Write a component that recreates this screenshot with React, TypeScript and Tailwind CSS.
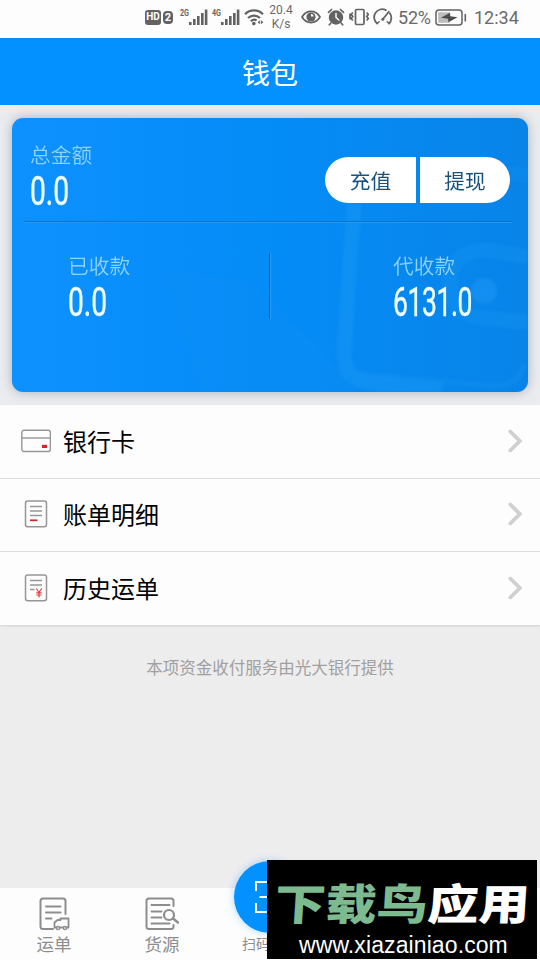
import type { ReactNode } from "react";

interface AmountProps {
    label: string;
    value: string;
    valueClass?: string;
}

interface MenuRowProps {
    label: string;
    icon: ReactNode;
    last?: boolean;
}

interface SignalProps {
    label: string;
}

const Signal = ({ label }: SignalProps) => (
    <svg width="28" height="18" viewBox="0 0 28 18" fill="#636363">
        <text
            x="0"
            y="8"
            fontSize="9.5"
            fontWeight="700"
            textLength="9"
            lengthAdjust="spacingAndGlyphs"
            fontFamily="Roboto, sans-serif"
        >
            {label}
        </text>
        <rect x="9" y="14" width="2.6" height="3" />
        <rect x="13" y="11" width="2.6" height="6" />
        <rect x="17" y="8" width="2.6" height="9" />
        <rect x="21" y="5" width="2.6" height="12" />
        <rect x="24.8" y="1.5" width="2.6" height="15.5" />
    </svg>
);

const StatusBar = () => (
    <div className="flex h-[38px] shrink-0 items-center bg-[#fdfdfd] pb-1 pl-[145px] text-[#6a6a6a] font-['Roboto',sans-serif]">
        <div className="flex h-[15px] w-4 shrink-0 items-center justify-center rounded-[3px] bg-[#636363] text-[10px] leading-none font-bold text-white">
            HD
        </div>
        <div className="ml-[2px] flex h-[13px] w-[10px] shrink-0 items-center justify-center rounded-sm rounded-tr-[4px] bg-[#636363] text-[11px] leading-none font-bold text-white">
            2
        </div>
        <div className="ml-[7px] shrink-0">
            <Signal label="2G" />
        </div>
        <div className="ml-1 shrink-0">
            <Signal label="4G" />
        </div>
        {/* wifi */}
        <svg className="ml-1 shrink-0" width="20" height="18" viewBox="0 0 20 18" fill="none" stroke="#636363" strokeWidth="2.2">
            <path d="M1 6.2C6 1.2 14 1.2 19 6.2" />
            <path d="M4 10C7.4 6.7 12.6 6.7 16 10" />
            <path d="M6.8 13.3C8.8 11.4 11.2 11.4 12.6 12.5" />
            <circle cx="9.8" cy="15.6" r="1.8" fill="#636363" stroke="none" />
            <path d="M15.8 12.2v4l-2.2-2zM16.8 12.2v4l2.6-2z" fill="#636363" stroke="none" />
        </svg>
        <div className="ml-[5px] w-6 shrink-0 text-center text-[12px] leading-[14px]">
            <div>20.4</div>
            <div>K/s</div>
        </div>
        {/* eye */}
        <svg className="ml-2 shrink-0" width="20" height="14" viewBox="0 0 20 14">
            <path d="M1 7C5.5-.4 14.5-.4 19 7C14.5 14.4 5.5 14.4 1 7z" fill="none" stroke="#636363" strokeWidth="1.7" />
            <circle cx="10" cy="7" r="4.6" fill="#636363" />
            <path d="M10 6.5V4A2.5 2.5 0 0 1 12.5 6.5z" fill="#fdfdfd" />
        </svg>
        {/* alarm */}
        <svg className="ml-[6px] shrink-0" width="18" height="18" viewBox="0 0 18 18" fill="none" stroke="#636363" strokeLinecap="round">
            <circle cx="9" cy="9.5" r="7.2" fill="#636363" stroke="none" />
            <path d="M1.5 4.3L4.5 1.5M16.5 4.3L13.5 1.5M3.7 15.2l-1.4 1.6M14.3 15.2l1.4 1.6" strokeWidth="1.7" />
            <path d="M9 5.5v4l2.8 2.5" stroke="#fdfdfd" strokeWidth="1.5" />
        </svg>
        {/* vibrate */}
        <svg className="ml-1 shrink-0" width="22" height="18" viewBox="0 0 22 18" fill="none" stroke="#636363">
            <rect x="6.5" y="1.5" width="8.5" height="15" rx="1.2" strokeWidth="1.7" />
            <path d="M3.8 4.5l-1.6 2 1.6 2-1.6 2 1.6 2M1 5.5v6M17.7 4.5l1.6 2-1.6 2 1.6 2-1.6 2" strokeWidth="1.7" />
        </svg>
        {/* gauge */}
        <svg className="ml-[2px] shrink-0" width="20" height="18" viewBox="0 0 20 18" fill="none" stroke="#636363" strokeLinecap="round">
            <path d="M4.2 15.5A8 8 0 0 1 12.8 2.1M16.8 5.2a8 8 0 0 1-.7 10.3" strokeWidth="1.8" />
            <path d="M4.2 15.5l2-1.8M16.1 15.5l-2-1.8" strokeWidth="1.4" />
            <path d="M9.8 11.2L15.8 3.8" strokeWidth="1.8" />
            <circle cx="9.8" cy="11.2" r="1.5" fill="#636363" stroke="none" />
        </svg>
        <div className="ml-[5px] w-[35px] shrink-0 pt-px text-[18px] leading-none tracking-[-0.2px]">52%</div>
        {/* battery */}
        <svg className="ml-[2px] shrink-0" width="32" height="17" viewBox="0 0 32 17">
            <rect x="1" y="1" width="26" height="15" rx="3" fill="none" stroke="#636363" strokeWidth="1.5" />
            <rect x="3.2" y="3.2" width="11.5" height="10.6" fill="#bdbdbd" />
            <path d="M15 3.8L15.3 7.2L22.5 8.2L13.5 13.2L13 9.8L6 8.8z" fill="#4d4d4d" />
            <rect x="29.5" y="5" width="1.6" height="7.5" fill="#636363" />
        </svg>
        <div className="ml-[7px] shrink-0 pt-px text-[18px] leading-none">12:34</div>
    </div>
);

const Amount = ({ label, value, valueClass = "scale-x-[0.68]" }: AmountProps) => (
    <div className="flex flex-col items-start">
        <div className="text-[20.7px] leading-[24px] font-[350] text-[#8fd3fb]">{label}</div>
        <div className={`mt-[3px] origin-left font-['Roboto',sans-serif] text-[41.5px] leading-[43px] whitespace-nowrap text-[#f0ffff] [-webkit-text-stroke:0.4px_#f0ffff] ${valueClass}`}>
            {value}
        </div>
    </div>
);

// faint wallet outline behind the amounts
const WalletArt = () => (
    <svg className="absolute inset-0 blur-[1.5px]" width="516" height="274" viewBox="0 0 516 274" fill="none" stroke="#1b98f5">
        <path d="M150 150L238 163L310 232Q334 258 350 280H190Z" fill="#1290f4" stroke="none" opacity="0.3" />
        <path d="M342 85L332 235Q332 262 358 265L430 272" strokeWidth="15" opacity="0.45" />
        <path d="M348 256L480 268Q508 268 512 246" strokeWidth="6" opacity="0.25" />
        <path d="M520 139L476 132Q441 132 438 162Q437 194 464 199L520 205" strokeWidth="15" opacity="0.3" />
        <path d="M438 67Q475 50 520 58" strokeWidth="14" opacity="0.2" />
        <circle cx="472" cy="173" r="13" fill="#1b98f5" stroke="none" opacity="0.5" />
    </svg>
);

const WalletCard = () => (
    <div className="relative mx-3 mt-[13px] h-[274px] overflow-hidden rounded-[11px] bg-linear-to-r from-[#0d91ff] via-[#048cf7] to-[#0884e8] text-white">
        <WalletArt />
        <div className="relative px-[18px] pt-6">
            <div className="flex h-[73px] justify-between">
                <Amount label="总金额" value="0.0" />
                <div className="mt-[15px] flex h-[46px] gap-1 text-[20.7px] text-[#17527f]">
                    <button className="w-[91px] rounded-l-full bg-white pt-px">充值</button>
                    <button className="w-[90px] rounded-r-full bg-white pt-px">提现</button>
                </div>
            </div>
            <div className="mt-[6px] mr-[-2px] ml-[-6px] h-[2px] border-t border-[#0876cb] bg-[#2396f2]" />
        </div>
        <div className="relative flex pt-[30px]">
            <div className="w-[257px] pl-14">
                <Amount label="已收款" value="0.0" />
            </div>
            <div className="h-[66px] w-[2px] border-l border-[#095b9f] bg-[#2a9af2]" />
            <div className="pl-[122px]">
                <Amount label="代收款" value="6131.0" valueClass="scale-x-[0.64] tracking-[-0.7px]" />
            </div>
        </div>
    </div>
);

const CardIcon = () => (
    <svg width="30" height="24" viewBox="0 0 30 24" fill="none" stroke="#969696" strokeWidth="1.4">
        <rect x=".8" y="1.3" width="28.6" height="21.2" rx="2.2" />
        <path d="M1 9h28.5" />
        <rect x="21" y="15.8" width="5" height="3.2" fill="#d0272d" stroke="none" />
    </svg>
);

const BillIcon = () => (
    <svg width="24" height="28" viewBox="0 0 24 28" fill="none" stroke="#969696" strokeWidth="1.5">
        <rect x="1.5" y="1" width="21" height="25.7" rx="2.2" />
        <path d="M6 6.5h12M6 11h12M6 15.5h12" />
        <path d="M6 20.3h7.5" stroke="#d0272d" strokeWidth="1.7" />
    </svg>
);

const HistoryIcon = () => (
    <svg width="24" height="28" viewBox="0 0 24 28" fill="none" stroke="#969696" strokeWidth="1.5">
        <rect x="1.5" y="1" width="21" height="25.7" rx="2.2" />
        <path d="M6 6.5h12M6 11h12M6 15.5h4.5" />
        <path d="M12.3 14.5l2.7 4 2.7-4M15 18.5v5M12.3 18.8h5.4M12.3 21h5.4" stroke="#dd4045" strokeWidth="1.2" />
    </svg>
);

const MenuRow = ({ label, icon, last }: MenuRowProps) => (
    <div className={last ? "flex h-[73px] items-center pb-px" : "flex h-[73.5px] items-center border-b-[1.5px] border-[#dcdcdc] pb-px"}>
        <div className="ml-[18px] flex w-9 justify-center">{icon}</div>
        <div className="ml-[9px] text-[24px] leading-none text-black">{label}</div>
        <svg className="mr-[17px] ml-auto" width="16" height="24" viewBox="0 0 16 24" fill="none" stroke="#d0d0d0" strokeWidth="3.8" strokeLinecap="round">
            <path d="M3.3 2.5L12.8 12L3.3 21.5" />
        </svg>
    </div>
);

const TabBar = () => (
    <div className="mt-auto flex h-[72px] bg-[#fdfdfd] text-[17.5px] leading-none text-[#8d8d8d]">
        <div className="flex w-[108px] flex-col items-center pt-[9px]">
            <svg width="32" height="34" viewBox="0 0 32 34" fill="none" stroke="#8d8d8d" strokeWidth="2" strokeLinecap="round" strokeLinejoin="round">
                <path d="M15 32H5Q2.500 32 2.500 29.500V4Q2.500 1.500 5 1.500H25Q27.500 1.500 27.500 4V17" />
                <path d="M8 9.5h14.5M8 15.5h14.5M8 21.5h5.5" />
                <path d="M18 30.500H16.500V25.500L19.500 23H22.500V21.500H30.500V30.500H29M22 30.500H25" strokeWidth="1.8" />
                <circle cx="20" cy="31" r="1.6" strokeWidth="1.5" />
                <circle cx="27" cy="31" r="1.6" strokeWidth="1.5" />
            </svg>
            <div className="mt-1">运单</div>
        </div>
        <div className="flex w-[108px] flex-col items-center pt-[9px]">
            <svg width="34" height="34" viewBox="0 0 34 34" fill="none" stroke="#8d8d8d" strokeWidth="2" strokeLinecap="round" strokeLinejoin="round">
                <path d="M28.500 9V4Q28.500 1.500 26 1.500H4Q1.500 1.500 1.500 4V29.500Q1.500 32 4 32H26Q28.500 32 28.500 29.500V28" />
                <path d="M6.5 8h18M6.5 14.5h10M6.5 20.5h10M6.5 26.5h18" />
                <circle cx="24" cy="18" r="5" strokeWidth="2.2" />
                <path d="M28 21.5l5 4" strokeWidth="2.4" />
            </svg>
            <div className="mt-1">货源</div>
        </div>
        <div className="flex w-[108px] flex-col items-center">
            <div className="mt-[-27px] flex size-[72px] shrink-0 items-center justify-center rounded-full bg-[#0291ff] shadow-[0_0_8px_rgba(2,145,255,0.35)]">
                <svg width="34" height="34" viewBox="0 0 34 34" fill="none" stroke="#fff" strokeWidth="2">
                    <path d="M14 2H3V11M20 2h11v9M3 23v9h11M31 23v9H20M6.5 17h21" />
                </svg>
            </div>
            <div className="mt-[3px] w-[56px] text-[14px]">扫码</div>
        </div>
    </div>
);

const Watermark = () => (
    <div className="absolute top-[860px] left-[267px] h-[99px] w-[270px] overflow-hidden bg-black">
        <div className="mt-[16px] ml-[8px] origin-center -skew-x-3 scale-y-[0.84] text-[51px] leading-[52px] font-black whitespace-nowrap text-white">
            <span className="text-[#7dba8f]">下载鸟</span>应用
        </div>
        <div className="mt-[5px] ml-8 w-max origin-left font-['Liberation_Sans',sans-serif] text-[23px] leading-6 tracking-[0.1px] text-white">
            www.xiazainiao.com
        </div>
    </div>
);

const App = () => {
    return (
        <div className="relative flex h-[960px] w-[540px] flex-col overflow-hidden bg-[#eeedee] font-['Noto_Sans_CJK_SC',sans-serif]">
            <StatusBar />
            <div className="flex h-[67px] shrink-0 items-center justify-center bg-[#0291ff] text-[28px] leading-none text-white">
                钱包
            </div>
            <div className="flow-root h-[300px] shrink-0 bg-[#ebecef]">
                <div className="drop-shadow-[0_0_6px_rgba(70,90,110,0.4)]">
                    <WalletCard />
                </div>
            </div>
            <div className="relative h-[219.5px] shrink-0 bg-[#fdfdfd] shadow-[0_1px_2px_rgba(0,0,0,0.12)]">
                <MenuRow label="银行卡" icon={<CardIcon />} />
                <MenuRow label="账单明细" icon={<BillIcon />} />
                <MenuRow label="历史运单" icon={<HistoryIcon />} last />
            </div>
            <div className="mt-[34px] text-center text-[16.5px] leading-none text-[#a0a0a0]">
                本项资金收付服务由光大银行提供
            </div>
            <TabBar />
            <Watermark />
        </div>
    );
};

export default App;
